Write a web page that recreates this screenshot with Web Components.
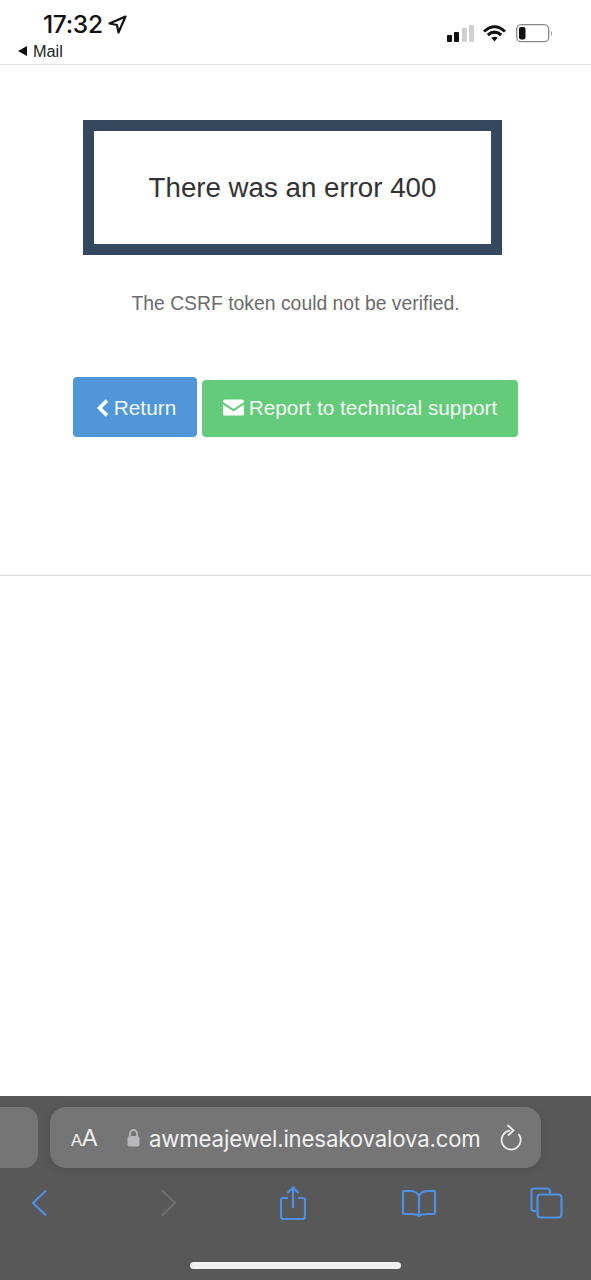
<!DOCTYPE html>
<html><head><meta charset="utf-8"><style>
html,body{margin:0;padding:0;background:#fff}
body{width:591px;height:1280px;overflow:hidden;display:flex;flex-direction:column;font-family:"Liberation Sans",Arial,sans-serif}
</style></head><body>
<ios-status></ios-status>
<error-page></error-page>
<safari-bar></safari-bar>
<script>
function def(name,html){customElements.define(name,class extends HTMLElement{constructor(){super();this.attachShadow({mode:'open'}).innerHTML=html}})}
def('ios-status',`<style>
:host{display:flex;flex:none;height:64px;border-bottom:1px solid #e4e4e4;justify-content:space-between;font-family:Inter,"Liberation Sans",sans-serif;color:#111}
.l{display:flex;flex-direction:column;padding:10px 0 0 18px}
.t{display:flex;align-items:center;gap:5px;padding-left:25px;font-size:24.500px;line-height:28px;font-weight:500;letter-spacing:-.3px}
.m{display:flex;align-items:center;gap:6px;font-size:16.300px;line-height:20px;margin-top:3px;color:#222;font-family:"Liberation Sans",sans-serif}
.r{display:flex;align-items:flex-start;padding:24px 38px 0 0}
</style><div class="l"><div class="t"><span>17:32</span>
<svg width="19" height="19" viewBox="0 0 19 19"><path d="M17.500 1.500 1.500 8.500 9 10 10.500 17.500Z" fill="none" stroke="#111" stroke-width="2.200" stroke-linejoin="round"/></svg></div>
<div class="m"><svg width="9" height="10" viewBox="0 0 9 10"><path d="M9 0V10L0 5Z" fill="#111"/></svg><span>Mail</span></div></div>
<div class="r">
<svg width="27" height="18" viewBox="0 0 27 18" style="margin-top:1px"><rect x="0" y="10" width="5" height="7" rx="1" fill="#111"/><rect x="7" y="7" width="5" height="10" rx="1" fill="#111"/><rect x="15" y="3" width="5" height="14" rx="1" fill="#d0d0d0"/><rect x="22" y="0" width="5" height="17" rx="1" fill="#d0d0d0"/></svg>
<svg width="23" height="17" viewBox="0 0 23 17" style="margin:1px 0 0 9px"><path d="M1 6.500Q11.500-3 22 6.500M4.800 10Q11.500 4.300 18.200 10" fill="none" stroke="#111" stroke-width="3"/><path d="M8.300 12.800Q11.500 10.500 14.700 12.800L11.500 16.500Z" fill="#111"/></svg>
<svg width="37" height="19" viewBox="0 0 37 19" style="margin-left:10px"><rect x=".7" y=".7" width="32" height="17" rx="4.500" fill="none" stroke="#888" stroke-width="1.300"/><rect x="3" y="3" width="6.500" height="12.500" rx="2" fill="#111"/><path d="M35.500 7.500v4" stroke="#aaa" stroke-width="1"/></svg>
</div>`);
def('error-page',`<style>
:host{display:flex;flex:1;flex-direction:column;color:#333}
.main{height:511px;box-sizing:border-box;border-bottom:1px solid #d9d9d9;display:flex;flex-direction:column;align-items:flex-start}
.box{margin:55px 0 0 83px;width:419px;height:135px;box-sizing:border-box;border:11.500px solid #34495e;display:flex;align-items:center;justify-content:center;font-size:27.700px;color:#333}
p{margin:37px 0 0;width:591px;text-align:center;font-size:19.370px;line-height:22px;color:#6b6b6b}
.btns{display:flex;align-items:flex-end;gap:5px;margin:63px 0 0 73px}
.b{display:flex;align-items:center;justify-content:center;box-sizing:border-box;border-radius:4px;color:#f4f8f4;font-size:20.800px}
.ret{width:124px;height:60px;background:#4f97d9;gap:5px;padding:2px 0 0 3px}
.rep{width:316px;height:57px;background:#64cb7b;gap:5px;padding-bottom:2px}
</style><div class="main"><div class="box">There was an error 400</div>
<p>The CSRF token could not be verified.</p>
<div class="btns"><div class="b ret"><svg width="12" height="18" viewBox="0 0 12 18"><path d="M10 1.500 2.500 9l7.500 7.500" fill="none" stroke="#fff" stroke-width="3.600"/></svg><span>Return</span></div>
<div class="b rep"><svg width="21" height="17" viewBox="0 0 21 17"><path d="M0 2.500Q0 .5 2 .5H19Q21 .5 21 2.500V3L10.500 10 0 3Z" fill="#fff"/><path d="M0 5.500 10.500 12.500 21 5.500V15Q21 16.500 19 16.500H2Q0 16.500 0 15Z" fill="#fff"/></svg><span>Report to technical support</span></div></div></div>`);
def('safari-bar',`<style>
:host{display:flex;flex:none;height:184px;background:#585858;flex-direction:column;box-sizing:border-box;padding-top:11px}
.row{display:flex;gap:12px;height:61px}
.tab{width:38px;background:#757575;border-radius:0 14px 14px 0}
.url{width:491px;background:#757575;border-radius:16px;display:flex;align-items:center;box-sizing:border-box;padding-left:21px;color:#f1f1f1;box-shadow:0 2px 10px rgba(0,0,0,.08)}
.aa{font-size:23px;width:56px;padding-top:2px;font-family:"Liberation Sans",sans-serif;white-space:nowrap}.aa small{font-size:16.500px}
.host{font-family:Inter,"Liberation Sans",sans-serif;font-size:22.200px;margin:1px 0 0 9px;letter-spacing:-.15px;white-space:nowrap;width:331px}
.nav{display:flex;align-items:center;height:69px;padding-left:31px}
.home{width:211px;height:7px;border-radius:4px;background:#f0f0f0;margin:25px 0 0 190px}
</style><div class="row"><div class="tab"></div><div class="url"><span class="aa"><small>A</small>A</span>
<svg width="13" height="18" viewBox="0 0 13 18"><rect x=".5" y="7" width="12" height="10.500" rx="2" fill="#b7b7b9"/><path d="M3 8V4.500a3.500 3.500 0 0 1 7 0V8" fill="none" stroke="#b7b7b9" stroke-width="1.800"/></svg>
<span class="host">awmeajewel.inesakovalova.com</span>
<svg width="22" height="28" viewBox="0 0 22 28" style="margin-left:20px"><path d="M10.500 6.500A9.500 9.500 0 1 0 18.500 10" fill="none" stroke="#f1f1f1" stroke-width="1.700"/><path d="M7.500 1 13.500 6.500 8 11.500" fill="none" stroke="#f1f1f1" stroke-width="1.700"/></svg></div></div>
<div class="nav">
<svg width="17" height="28" viewBox="0 0 17 28"><path d="M15 1.500 2 14l13 12.500" fill="none" stroke="#4f8fe6" stroke-width="2.200"/></svg>
<svg width="17" height="28" viewBox="0 0 17 28" style="margin-left:112px"><path d="M2 1.500 15 14 2 26.500" fill="none" stroke="#6f6f6f" stroke-width="2"/></svg>
<svg width="26" height="34" viewBox="0 0 26 34" style="margin-left:103px"><path d="M8 12H3Q1 12 1 14V30Q1 33 3 33H23Q25 33 25 30V14Q25 12 23 12H18M13 22V1.500M7.500 7 13 1.500 18.500 7" fill="none" stroke="#4f8fe6" stroke-width="2.200"/></svg>
<svg width="36" height="28" viewBox="0 0 36 28" style="margin-left:95px"><path d="M18 7Q16 2 9 2H3Q2 2 2 3V24Q2 25 3 25H10Q16 25 18 27Q20 25 26 25H33Q34 25 34 24V3Q34 2 33 2H27Q20 2 18 7ZM18 7V27" fill="none" stroke="#4f8fe6" stroke-width="2.200"/></svg>
<svg width="33" height="32" viewBox="0 0 33 32" style="margin-left:92.500px"><path d="M6 24H4Q1.500 24 1.500 21V4Q1.500 1.500 4 1.500H17Q20 1.500 20 4V6.500" fill="none" stroke="#4f8fe6" stroke-width="2.200"/><rect x="7.500" y="7.500" width="24" height="23" rx="3" fill="none" stroke="#4f8fe6" stroke-width="2.200"/></svg>
</div><div class="home"></div>`);
</script></body></html>
